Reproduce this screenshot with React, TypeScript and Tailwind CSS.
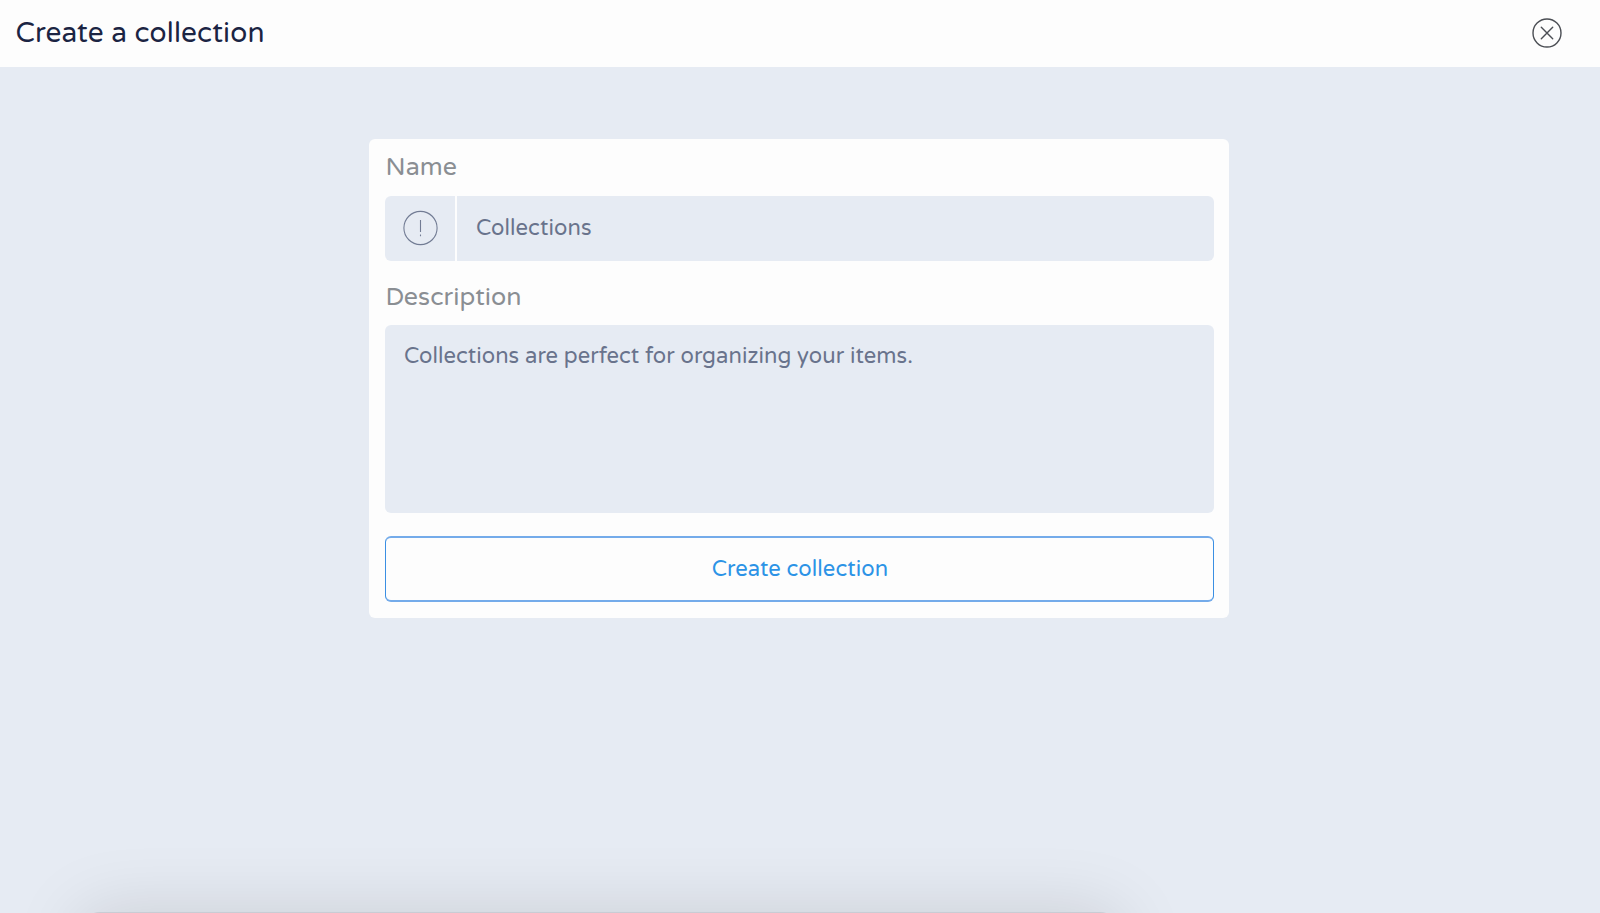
function CloseIcon() {
  return (
    <svg width="30" height="30" viewBox="0 0 30 30" fill="none" stroke="#4b4e54" strokeWidth="1.4" strokeLinecap="round">
      <circle cx="15" cy="15" r="14" />
      <path d="M9.3 9.3 20.7 20.7M20.7 9.3 9.3 20.7" />
    </svg>
  );
}

function AlertIcon() {
  return (
    <svg width="36" height="36" viewBox="0 0 36 36" fill="none" stroke="#727c94" strokeWidth="1.1">
      <circle cx="18.5" cy="18" r="16.6" />
      <path d="M18.5 10v12M18.5 24.6v1.6" />
    </svg>
  );
}

export default function App() {
  return (
    <div className="relative flex h-[913px] w-full flex-col overflow-hidden bg-[#e6ebf3] font-['Varela_Round','Noto_Sans',sans-serif]">
      <header className="flex h-[67px] shrink-0 items-center justify-between bg-[#fdfdfd] pr-[38px] pb-px pl-[15.5px]">
        <h1 className="text-[28px] leading-8 tracking-[0.18px] text-[#1b2443]">Create a collection</h1>
        <button type="button" aria-label="Close">
          <CloseIcon />
        </button>
      </header>

      <form className="mt-[72px] ml-[369px] flex h-[479px] w-[860px] shrink-0 flex-col rounded-[6px] bg-[#fdfdfd] pr-[15px] pl-4">
        <label htmlFor="name" className="mt-[10px] h-[47px] pl-[0.5px] text-[25px] leading-[37px] tracking-[0.06px] text-[#8a8e93]">
          Name
        </label>
        <div className="flex h-[65px] shrink-0 overflow-hidden rounded-[6px] bg-[#e6ebf3]">
          <div className="flex w-[72px] items-center justify-center border-r-2 border-[#fdfdfd] pb-[2px]">
            <AlertIcon />
          </div>
          <input
            id="name"
            placeholder="Collections"
            className="h-full min-w-0 flex-1 px-[19px] pb-[2px] text-[22px] tracking-[0.08px] outline-none placeholder:text-[#69738c] placeholder:opacity-100"
          />
        </div>
        <label htmlFor="description" className="mt-[17px] h-[47px] pl-[0.5px] text-[25px] leading-[38px] tracking-[0.06px] text-[#8a8e93]">
          Description
        </label>
        <textarea
          id="description"
          placeholder="Collections are perfect for organizing your items."
          className="h-[188px] shrink-0 resize-none rounded-[6px] bg-[#e6ebf3] px-[19px] py-[15px] text-[22px] leading-[32px] tracking-[0.05px] outline-none placeholder:text-[#69738c] placeholder:opacity-100"
        />
        <button
          type="button"
          className="mt-[23px] h-[66px] shrink-0 rounded-[6px] border-x border-y-2 border-x-[#3b8fe3] border-y-[#74abea] pl-px text-[22px] tracking-[0.08px] text-[#2c93e6]"
        >
          Create collection
        </button>
      </form>

      <div className="absolute top-[912px] left-[80px] h-[400px] w-[1040px] rounded-[20px] bg-[#c9ccd4] shadow-[0_0_70px_rgba(0,0,0,0.13)]" />
    </div>
  );
}
